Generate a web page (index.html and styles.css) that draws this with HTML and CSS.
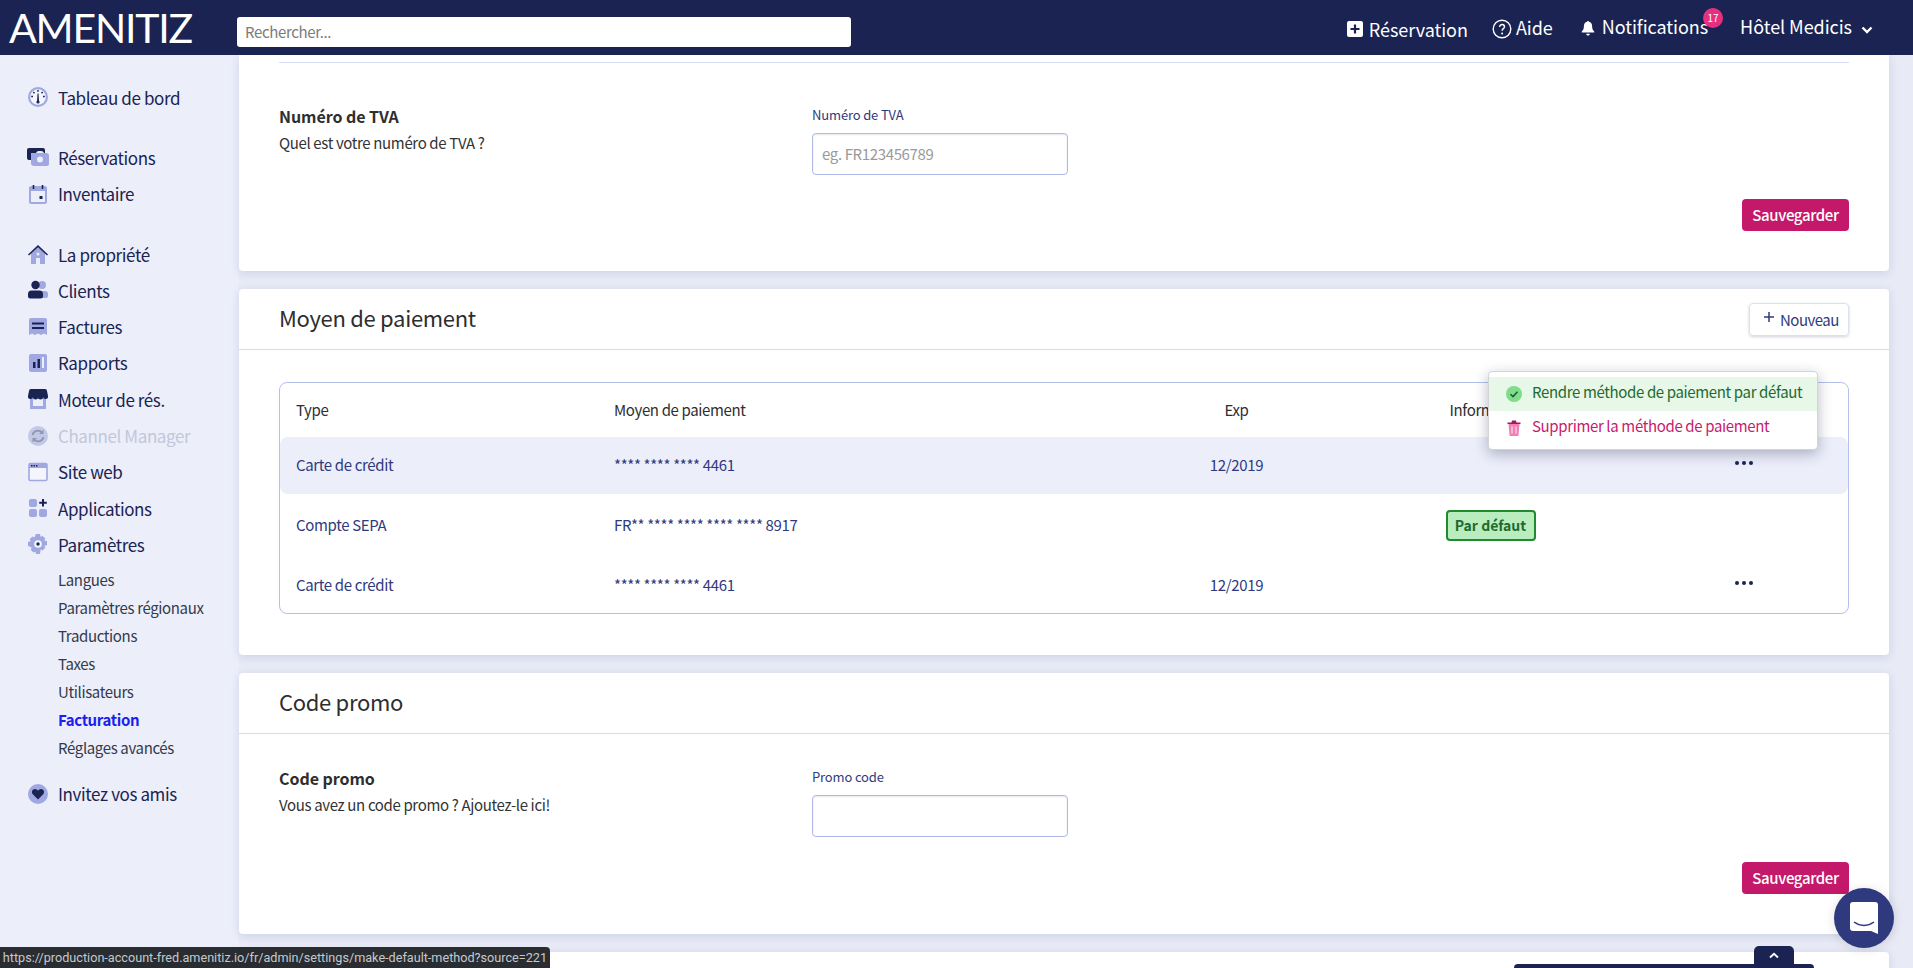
FILE: index.html
```html
<!DOCTYPE html>
<html lang="fr">
<head>
<meta charset="utf-8">
<title>Amenitiz - Facturation</title>
<link rel="stylesheet" href="styles.css">
</head>
<body>
<header class="topbar">
  <div class="logo">AMENITIZ</div>
  <div class="search">Rechercher...</div>
  <nav class="topnav">
    <a class="topitem topitem-res">
      <svg class="ticon" viewBox="0 0 16 16"><rect width="16" height="16" rx="2" fill="#fff"/><path d="M8 3.500v9M3.500 8h9" stroke="#1a2352" stroke-width="2.200"/></svg>
      <span>Réservation</span>
    </a>
    <a class="topitem topitem-help">
      <svg class="ticon-help" viewBox="0 0 20 20"><circle cx="10" cy="10" r="8.800" fill="none" stroke="#fff" stroke-width="1.400"/><path d="M7.600 8c0-1.600 1.100-2.500 2.500-2.500s2.400.9 2.400 2.200c0 2-2.400 1.900-2.400 4" fill="none" stroke="#fff" stroke-width="1.400"/><circle cx="10.100" cy="14.400" r="1" fill="#fff"/></svg>
      <span>Aide</span>
    </a>
    <a class="topitem topitem-notif">
      <svg class="ticon ticon-bell" viewBox="0 0 16 18"><path d="M8 1c.7 0 1.100.4 1.100 1 2.300.5 3.500 2.400 3.500 4.800 0 3.400 1 4.700 2.400 6.200v1H1v-1c1.400-1.500 2.400-2.800 2.400-6.200C3.400 4.400 4.600 2.500 6.900 2 6.900 1.400 7.300 1 8 1z" fill="#fff"/><path d="M6 15.500h4c0 1.200-.9 2-2 2s-2-.8-2-2z" fill="#fff"/></svg>
      <span>Notifications</span>
      <span class="badge">17</span>
    </a>
    <a class="topitem topitem-hotel">
      <span>Hôtel Medicis</span>
      <svg class="chev" viewBox="0 0 12 8"><path d="M1.500 1.500 6 6l4.500-4.500" fill="none" stroke="#fff" stroke-width="2.400"/></svg>
    </a>
  </nav>
</header>

<div class="layout">
  <aside class="sidebar">
    <div class="navgroup">
      <a class="navitem"><svg class="nicon" viewBox="0 0 20 20"><circle cx="10" cy="10" r="10" fill="#9fa8e0"/><circle cx="10" cy="10" r="7.800" fill="#f4f5fd"/><path d="M10 3v1.800M3.200 9.500H5M15 9.500h1.800M5.300 5l1.200 1.200M14.700 5l-1.200 1.200" stroke="#1a2352" stroke-width="1.500"/><path d="M9.500 6.500h1l.5 8H9z" fill="#1a2352"/><circle cx="10" cy="15" r="1.600" fill="#1a2352"/></svg><span>Tableau de bord</span></a>
    </div>
    <div class="navgroup">
      <a class="navitem"><svg class="nicon nicon-wide" viewBox="0 0 22 18"><rect x="0" y="0" width="18" height="12" rx="2" fill="#1a2352"/><path d="M4 5h15a3 3 0 0 1 3 3v8a2 2 0 0 1-2 2H7a3 3 0 0 1-3-3z" fill="#9fa8e0"/><path d="M9 5a3 3 0 0 1 3-2h2a3 3 0 0 1 3 2z" fill="#eceefa"/><circle cx="13" cy="11.500" r="3" fill="#eceefa"/></svg><span>Réservations</span></a>
      <a class="navitem"><svg class="nicon" viewBox="0 0 20 20"><rect x="2" y="3" width="16" height="16" rx="1.500" fill="#eceefa" stroke="#9fa8e0" stroke-width="2"/><rect x="1" y="3" width="18" height="4" fill="#9fa8e0"/><path d="M5.500 1v4M14.500 1v4" stroke="#1a2352" stroke-width="1.600"/><rect x="11.500" y="12" width="3" height="3" fill="#1a2352"/></svg><span>Inventaire</span></a>
    </div>
    <div class="navgroup">
      <a class="navitem"><svg class="nicon" viewBox="0 0 20 20"><path d="M3 9v11h5v-6h4v6h5V9l-7-6z" fill="#9fa8e0"/><path d="M0 10.500 10 1l10 9.500-1 1-9-8.300-9 8.300z" fill="#1a2352"/><circle cx="10" cy="10" r="1.500" fill="#eceefa"/></svg><span>La propriété</span></a>
      <a class="navitem"><svg class="nicon" viewBox="0 0 20 20"><circle cx="14" cy="5" r="4" fill="#9fa8e0"/><path d="M9 11h8a3 3 0 0 1 3 3v2a2 2 0 0 1-2 2H9z" fill="#9fa8e0"/><circle cx="7.500" cy="5" r="4.200" fill="#1a2352"/><path d="M3.500 10.500h8a3.500 3.500 0 0 1 3.500 3.500v2a2.500 2.500 0 0 1-2.500 2.500h-10A2.500 2.500 0 0 1 0 16v-2a3.500 3.500 0 0 1 3.500-3.500z" fill="#1a2352"/></svg><span>Clients</span></a>
      <a class="navitem"><svg class="nicon" viewBox="0 0 20 20"><path d="M1 3a2 2 0 0 1 2-2h14a2 2 0 0 1 2 2v15l-3-1.500-3 1.500-3-1.500-3 1.500-3-1.500-3 1.500z" fill="#9fa8e0"/><path d="M4 6.500h12M4 11h12" stroke="#1a2352" stroke-width="1.900"/></svg><span>Factures</span></a>
      <a class="navitem"><svg class="nicon" viewBox="0 0 20 20"><rect x="1" y="1" width="18" height="18" rx="2" fill="#9fa8e0"/><rect x="5" y="9" width="2.500" height="6" fill="#1a2352"/><rect x="9.500" y="6" width="2.500" height="9" fill="#1a2352"/><rect x="14" y="4" width="2" height="11" fill="#eceefa"/></svg><span>Rapports</span></a>
      <a class="navitem"><svg class="nicon" viewBox="0 0 20 20"><rect x="2" y="7" width="16" height="13" fill="#9fa8e0"/><rect x="5" y="10" width="10" height="7" fill="#eceefa"/><path d="M3 0h14a2 2 0 0 1 2 2l1 5a2.500 2.500 0 0 1-5 1 2.500 2.500 0 0 1-5 0 2.500 2.500 0 0 1-5 0 2.500 2.500 0 0 1-5-1l1-5a2 2 0 0 1 2-2z" fill="#1a2352"/></svg><span>Moteur de rés.</span></a>
      <a class="navitem navitem-off"><svg class="nicon" viewBox="0 0 20 20"><circle cx="10" cy="10" r="10" fill="#c2c8e8"/><path d="M4.500 9A5.500 5.500 0 0 1 14 6.500M15.500 11A5.500 5.500 0 0 1 6 13.500" fill="none" stroke="#9296ab" stroke-width="1.800"/><path d="M15.500 3.500v4.500H11zM4.500 16.500V12H9z" fill="#9296ab"/></svg><span>Channel Manager</span></a>
      <a class="navitem"><svg class="nicon" viewBox="0 0 20 20"><rect x="1" y="1.500" width="18" height="17" rx="1.500" fill="#f4f5fd" stroke="#9fa8e0" stroke-width="1.600"/><rect x="1" y="1.500" width="18" height="4.500" fill="#9fa8e0"/><path d="M3 3.700h1.500M5.500 3.700H7M8 3.700h1.500" stroke="#1a2352" stroke-width="1.500"/></svg><span>Site web</span></a>
      <a class="navitem"><svg class="nicon" viewBox="0 0 20 20"><rect x="1" y="1" width="8" height="8" rx="2" fill="#9fa8e0"/><rect x="1" y="11" width="8" height="8" rx="2" fill="#9fa8e0"/><rect x="11" y="11" width="8" height="8" rx="2" fill="#9fa8e0"/><path d="M15 1v7.500M11.200 4.800h7.600" stroke="#1a2352" stroke-width="2"/></svg><span>Applications</span></a>
      <a class="navitem"><svg class="nicon" viewBox="0 0 20 20"><path d="M8 0h4l.6 2.800 2-.9 2.700 2.700-1 2 2.700.6v4l-2.700.6 1 2-2.700 2.700-2-1L12 20H8l-.6-2.500-2 1-2.700-2.700 1-2L1 12.200 0 12V8l2.700-.8-1-2 2.700-2.700 2 .9z" fill="#9fa8e0"/><circle cx="10" cy="10" r="3.800" fill="#f4f5fd"/><circle cx="10" cy="10" r="1.700" fill="#1a2352"/></svg><span>Paramètres</span></a>
      <div class="subnav">
        <a class="subitem">Langues</a>
        <a class="subitem">Paramètres régionaux</a>
        <a class="subitem">Traductions</a>
        <a class="subitem">Taxes</a>
        <a class="subitem">Utilisateurs</a>
        <a class="subitem subitem-active">Facturation</a>
        <a class="subitem">Réglages avancés</a>
      </div>
    </div>
    <div class="navgroup navgroup-last">
      <a class="navitem"><svg class="nicon" viewBox="0 0 20 20"><circle cx="10" cy="10" r="10" fill="#9fa8e0"/><path d="M10 15.500 4.800 10.200C3 8.200 4.300 5 7 5c1.300 0 2.300.7 3 1.800C10.700 5.700 11.700 5 13 5c2.700 0 4 3.200 2.200 5.200z" fill="#1a2352"/></svg><span>Invitez vos amis</span></a>
    </div>
  </aside>

  <main class="content">
    <section class="card card-first">
      <div class="topline"></div>
      <div class="formrow formrow-first">
        <div class="formtext">
          <div class="formtitle">Numéro de TVA</div>
          <div class="formdesc">Quel est votre numéro de TVA ?</div>
        </div>
        <div class="field">
          <div class="fieldlabel">Numéro de TVA</div>
          <div class="input input-placeholder">eg. FR123456789</div>
        </div>
      </div>
      <div class="actions"><a class="btn-save">Sauvegarder</a></div>
    </section>

    <section class="card card-pay">
      <div class="cardhead">
        <h2 class="cardtitle">Moyen de paiement</h2>
        <a class="btn-new"><svg class="plus" viewBox="0 0 12 12"><path d="M6 1v10M1 6h10" stroke="#2f3a7e" stroke-width="1.500"/></svg>Nouveau</a>
      </div>
      <div class="paybody">
        <div class="ptable">
          <div class="prow prow-head">
            <div>Type</div><div>Moyen de paiement</div><div class="cell-center">Exp</div><div class="cell-info cell-info-head">Informations</div><div></div>
          </div>
          <div class="prow prow-hover">
            <div>Carte de crédit</div><div>**** **** **** 4461</div><div class="cell-center">12/2019</div><div class="cell-info"></div><div class="dots"><i></i><i></i><i></i></div>
          </div>
          <div class="prow prow-sepa">
            <div>Compte SEPA</div><div>FR** **** **** **** **** 8917</div><div class="cell-center"></div><div class="cell-info"><span class="tag">Par défaut</span></div><div></div>
          </div>
          <div class="prow prow-last">
            <div>Carte de crédit</div><div>**** **** **** 4461</div><div class="cell-center">12/2019</div><div class="cell-info"></div><div class="dots"><i></i><i></i><i></i></div>
          </div>
          <div class="popup">
            <a class="popitem popitem-ok">
              <svg class="popicon" viewBox="0 0 16 16"><circle cx="8" cy="8" r="8" fill="#7fdc8b"/><path d="M4.500 8.300 7 10.600l4.500-4.800" fill="none" stroke="#1d5c2c" stroke-width="1.500"/></svg>
              <span>Rendre méthode de paiement par défaut</span>
            </a>
            <a class="popitem popitem-del">
              <svg class="popicon" viewBox="0 0 16 16"><path d="M2.500 4h11l-1 11a.8.8 0 0 1-.8 1H4.300a.8.8 0 0 1-.8-1z" fill="#f07fb3"/><path d="M6 6.500v7M10 6.500v7" stroke="#fbd9e8" stroke-width="1.300"/><path d="M1.500 2.500h13V4h-13zM5.500 2.500 6 .5h4l.5 2z" fill="#a3195c"/></svg>
              <span>Supprimer la méthode de paiement</span>
            </a>
          </div>
        </div>
      </div>
    </section>

    <section class="card card-promo">
      <div class="cardhead cardhead-promo"><h2 class="cardtitle">Code promo</h2></div>
      <div class="formrow formrow-promo">
        <div class="formtext">
          <div class="formtitle">Code promo</div>
          <div class="formdesc">Vous avez un code promo ? Ajoutez-le ici!</div>
        </div>
        <div class="field">
          <div class="fieldlabel">Promo code</div>
          <div class="input"></div>
        </div>
      </div>
      <div class="actions"><a class="btn-save">Sauvegarder</a></div>
    </section>

    <section class="card card-next"></section>
  </main>
</div>

<div class="statusbar"><span>https://production-account-fred.amenitiz.io/fr/admin/settings/make-default-method?source=221</span></div>

<div class="savebar-tab"><svg class="savebar-chev" viewBox="0 0 10 7"><path d="M1 5.500 5 1.800l4 3.700" fill="none" stroke="#fff" stroke-width="1.800"/></svg></div>
<div class="savebar"></div>

<div class="chat">
  <svg class="chat-icon" viewBox="0 0 28 32"><path d="M3 0h22a3 3 0 0 1 3 3v29l-7-3H3a3 3 0 0 1-3-3V3a3 3 0 0 1 3-3z" fill="#fff"/><path d="M4 20c6 4.500 14 4.500 20 0" fill="none" stroke="#2f3a7e" stroke-width="1.500"/></svg>
</div>
</body>
</html>
```
FILE: styles.css
```css
* { box-sizing: border-box; }
html, body { margin: 0; height: 968px; overflow: hidden; }
body {
  position: relative;
  background: #eceefa;
  font-family: "Noto Sans CJK SC", "Noto Sans", sans-serif;
  color: #2e2e2e;
  letter-spacing: -0.36px;
}
a { text-decoration: none; color: inherit; }

/* Top bar */
.topbar {
  height: 55px;
  background: #1a2352;
  display: flex;
  align-items: center;
  position: relative;
  z-index: 3;
}
.logo {
  width: 237px;
  padding-left: 9px;
  font-family: "Lato", sans-serif;
  font-size: 41px;
  line-height: 55px;
  letter-spacing: -1.2px;
  color: #fff;
}
.search {
  width: 614px;
  height: 30px;
  margin-top: 9px;
  padding-left: 8px;
  background: #fff;
  border-radius: 3px;
  font-size: 15px;
  line-height: 30px;
  color: #7b7b7b;
}
.topnav {
  margin-left: auto;
  display: flex;
  align-items: center;
  color: #fff;
  font-size: 18px;
  letter-spacing: -0.05px;
  line-height: 26px;
  padding-right: 40px;
}
.topitem { display: flex; align-items: center; position: relative; }
.topitem-res { gap: 6px; margin-top: 3px; }
.topitem-help { gap: 4px; margin-left: 24px; margin-top: -2px; }
.topitem-notif { gap: 6px; margin-left: 27px; margin-top: -3px; }
.topitem-hotel { gap: 9px; margin-left: 32px; margin-top: -3px; }
.ticon { width: 16px; height: 16px; }
.ticon-bell { margin-top: 3px; }
.ticon-help { width: 20px; height: 20px; margin-top: 4px; }
.chev { width: 12px; height: 8px; margin-top: 8px; }
.badge {
  position: absolute;
  right: -15px;
  top: -5px;
  width: 20px;
  height: 20px;
  border-radius: 50%;
  background: #e6307f;
  font-size: 10px;
  line-height: 20px;
  text-align: center;
}

/* Layout */
.layout { display: flex; height: 913px; overflow: hidden; }
.sidebar { width: 239px; flex: none; padding: 24px 0 0 28px; }
.navgroup { margin-bottom: 24px; }
.navgroup-last { margin-top: -10px; }
.navitem {
  display: flex;
  align-items: center;
  height: 36.3px;
  gap: 10px;
  font-size: 17px;
  letter-spacing: -0.4px;
  color: #1a2352;
}
.nicon { width: 20px; height: 20px; flex: none; }
.nicon-wide { width: 22px; margin: 0 -1px 0 -1px; height: 18px; }
.navitem-off { color: #c3c7db; }
.subnav { padding: 3px 0 0 30px; }
.subitem {
  display: block;
  height: 28px;
  font-size: 15px;
  line-height: 27px;
  color: #333a4a;
}
.subitem-active { color: #1a1ff0; font-weight: 700; }

/* Cards */
.content {
  flex: 1;
  min-width: 0;
  padding-right: 24px;
  display: flex;
  flex-direction: column;
  gap: 18px;
  background: #e8eaf6;
}
.card {
  background: #fff;
  border-radius: 4px;
  box-shadow: 0 2px 10px rgba(40, 55, 130, 0.14);
  flex: none;
}
.card-first { height: 216px; border-radius: 0 0 4px 4px; padding-top: 7px; }
.card-pay { height: 366px; }
.card-promo { height: 261px; }
.card-next { height: 100px; }
.topline { height: 1px; margin: 0 40px; background: #d5daf6; }
.formrow { display: flex; padding: 0 40px; height: 136px; }
.formrow-first { padding-top: 41px; }
.formrow-promo { padding-top: 32px; height: 128px; }
.formtext { width: 533px; flex: none; }
.formtitle { font-size: 16px; letter-spacing: -0.05px; font-weight: 700; line-height: 24px; color: #2e2e2e; }
.formdesc { font-size: 15px; line-height: 22px; margin-top: 4px; color: #333; }
.field { width: 256px; margin-top: 2px; }
.fieldlabel { font-size: 13px; letter-spacing: -0.15px; line-height: 20px; color: #2f3a7e; margin-top: -1px; }
.input {
  height: 42px;
  margin-top: 8px;
  border: 1px solid #aeb9ea;
  border-radius: 4px;
  padding-left: 9px;
  font-size: 15px;
  line-height: 40px;
  box-shadow: inset 0 1px 2px rgba(60, 70, 140, 0.12);
}
.input-placeholder { color: #9a9a9a; }
.actions { display: flex; justify-content: flex-end; padding: 0 40px; }
.btn-save {
  width: 107px;
  height: 32px;
  background: #c4196a;
  color: #fff;
  border-radius: 4px;
  font-size: 15px;
  font-weight: 500;
  line-height: 31px;
  text-align: center;
}

/* Card head */
.cardhead {
  height: 61px;
  padding: 0 40px;
  border-bottom: 1px solid #d5daf6;
  display: flex;
  align-items: center;
  justify-content: space-between;
}
.cardhead-promo { height: 61px; }
.cardtitle { margin: 0 0 4px; font-size: 22px; letter-spacing: -0.3px; font-weight: 400; line-height: 30px; color: #2e2e2e; }
.btn-new {
  width: 100px;
  height: 33px;
  padding-left: 13px;
  border: 1px solid #dcdfee;
  border-radius: 4px;
  box-shadow: 0 1px 3px rgba(30, 40, 90, 0.2);
  display: flex;
  align-items: center;
  gap: 5px;
  font-size: 15px;
  letter-spacing: -0.5px;
  color: #2f3a7e;
}
.plus { width: 12px; height: 12px; margin-top: -4px; }

/* Payment table */
.paybody { padding: 32px 40px 0; }
.ptable {
  position: relative;
  height: 232px;
  border: 1px solid #b4c0ec;
  border-radius: 8px;
}
.prow {
  display: grid;
  grid-template-columns: 318px 512.500px 220px 1fr 80px;
  align-items: center;
  padding: 0 64px 2px 16px;
  height: 60px;
  font-size: 15px;
  color: #2f3a7e;
}
.prow-head { height: 54px; color: #2e2e2e; }
.prow-hover { height: 57px; margin-bottom: 2px; background: #eceefa; border-radius: 8px; }
.prow-sepa { padding-bottom: 4px; }
.prow-last { height: 58px; }
.cell-center { text-align: center; }
.cell-info { padding-left: 99px; }
.cell-info-head { padding-left: 103px; }
.tag {
  display: block;
  width: 90px;
  height: 31px;
  margin-top: 2px;
  border: 2px solid #1f8a2f;
  border-radius: 4px;
  background: #b9edbd;
  color: #1f6a2e;
  font-size: 14px;
  letter-spacing: 0;
  font-weight: 700;
  line-height: 26px;
  text-align: center;
}
.dots { display: flex; justify-content: center; gap: 3px; margin-top: -4px; }
.prow-last .dots { margin-top: -2px; }
.dots i { width: 4px; height: 4px; border-radius: 50%; background: #1a2352; }

/* Popup */
.popup {
  position: absolute;
  left: 1208px;
  top: -12px;
  width: 330px;
  height: 79px;
  padding-top: 5px;
  background: #fff;
  border: 1px solid #d3d3d8;
  border-radius: 4px;
  box-shadow: 0 4px 14px rgba(20, 25, 60, 0.3);
  font-size: 15px;
}
.popitem {
  display: flex;
  align-items: center;
  gap: 10px;
  height: 34px;
  padding-left: 17px;
}
.popitem span { padding-bottom: 6px; }
.popitem-ok { background: #e7f7e8; color: #1f6a2e; }
.popitem-del { color: #c8196d; }
.popicon { width: 16px; height: 16px; }

/* Overlays */
.statusbar {
  position: absolute;
  left: 0;
  bottom: 0;
  width: 550px;
  height: 21px;
  background: #292d31;
  border-radius: 0 4px 0 0;
  display: flex;
  justify-content: flex-end;
  overflow: hidden;
  padding-right: 3px;
  font-family: "Roboto", sans-serif;
  font-size: 12.650px;
  letter-spacing: 0;
  line-height: 21px;
  color: #c6c9cc;
  white-space: nowrap;
  z-index: 4;
}
.statusbar span { flex: none; }
.savebar-tab {
  position: absolute;
  left: 1754px;
  top: 946px;
  width: 40px;
  height: 22px;
  background: #1a2352;
  border-radius: 5px 5px 0 0;
  display: flex;
  justify-content: center;
  padding-top: 6px;
  z-index: 4;
}
.savebar-chev { width: 10px; height: 7px; }
.savebar {
  position: absolute;
  left: 1514px;
  top: 964px;
  width: 300px;
  height: 4px;
  background: #1a2352;
  border-radius: 4px 4px 0 0;
  z-index: 4;
}
.chat {
  position: absolute;
  left: 1834px;
  top: 888px;
  width: 60px;
  height: 60px;
  border-radius: 50%;
  background: #2f3a7e;
  box-shadow: 0 1px 12px rgba(0, 0, 0, 0.12);
  display: flex;
  align-items: center;
  justify-content: center;
  z-index: 5;
}
.chat-icon { width: 28px; height: 32px; }
```
